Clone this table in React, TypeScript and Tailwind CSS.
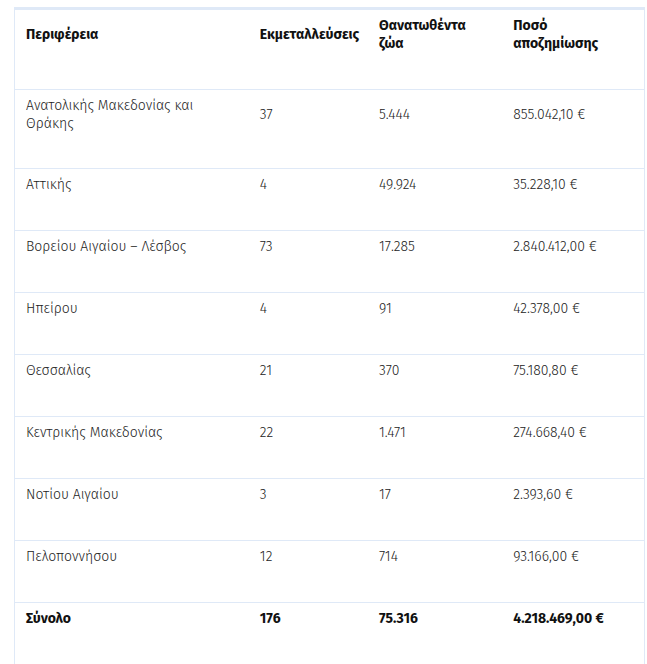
import React from "react";

const rows: [string, string, string, string][] = [
  ["Ανατολικής Μακεδονίας και Θράκης", "37", "5.444", "855.042,10 €"],
  ["Αττικής", "4", "49.924", "35.228,10 €"],
  ["Βορείου Αιγαίου – Λέσβος", "73", "17.285", "2.840.412,00 €"],
  ["Ηπείρου", "4", "91", "42.378,00 €"],
  ["Θεσσαλίας", "21", "370", "75.180,80 €"],
  ["Κεντρικής Μακεδονίας", "22", "1.471", "274.668,40 €"],
  ["Νοτίου Αιγαίου", "3", "17", "2.393,60 €"],
  ["Πελοποννήσου", "12", "714", "93.166,00 €"],
];

export default function App() {
  return (
    <div className="min-h-[664px] bg-white pt-[7px] pl-[14px] pr-[2px] font-['Fira_Sans',Lato,sans-serif] text-[14px] leading-[18px]">
      <div className="border-t-[3px] border-[#dfe9f7]">
        <table className="w-[631px] table-fixed border-collapse border-x border-[#dfe9f7]">
          <colgroup>
            <col className="w-[234px]" />
            <col className="w-[119px]" />
            <col className="w-[134px]" />
            <col className="w-[142px]" />
          </colgroup>
          <thead>
            <tr className="text-left align-middle font-bold text-[#111]">
              <th className="pl-[11px] pr-2 pt-[7px] pb-[36px] font-bold">Περιφέρεια</th>
              <th className="pl-[11px] pr-1 pt-[7px] pb-[36px] font-bold">Εκμεταλλεύσεις</th>
              <th className="pl-[11px] pr-[30px] pt-[7px] pb-[36px] font-bold">Θανατωθέντα ζώα</th>
              <th className="pl-[11px] pr-[30px] pt-[7px] pb-[36px] font-bold">Ποσό αποζημίωσης</th>
            </tr>
          </thead>
          <tbody className="font-light text-[#222]">
            {rows.map((r, i) => (
              <tr key={r[0]} className="border-t border-[#dfe9f7] align-middle">
                <td className={i === 0 ? "pl-[11px] pr-8 pt-[7px] pb-[35px]" : "pl-[11px] pr-8 pt-[7px] pb-[36px]"}>{r[0]}</td>
                <td className={i === 0 ? "pl-[11px] pr-2 pt-[7px] pb-[35px]" : "pl-[11px] pr-2 pt-[7px] pb-[36px]"}>{r[1]}</td>
                <td className={i === 0 ? "pl-[11px] pr-2 pt-[7px] pb-[35px]" : "pl-[11px] pr-2 pt-[7px] pb-[36px]"}>{r[2]}</td>
                <td className={i === 0 ? "pl-[11px] pr-2 pt-[7px] pb-[35px]" : "pl-[11px] pr-2 pt-[7px] pb-[36px]"}>{r[3]}</td>
              </tr>
            ))}
            <tr className="border-t border-[#dfe9f7] align-middle font-bold text-[#111]">
              <td className="pl-[11px] pr-2 pt-[7px] pb-[36px]">Σύνολο</td>
              <td className="pl-[11px] pr-2 pt-[7px] pb-[36px]">176</td>
              <td className="pl-[11px] pr-2 pt-[7px] pb-[36px]">75.316</td>
              <td className="pl-[11px] pr-2 pt-[7px] pb-[36px]">4.218.469,00 €</td>
            </tr>
          </tbody>
        </table>
      </div>
    </div>
  );
}
